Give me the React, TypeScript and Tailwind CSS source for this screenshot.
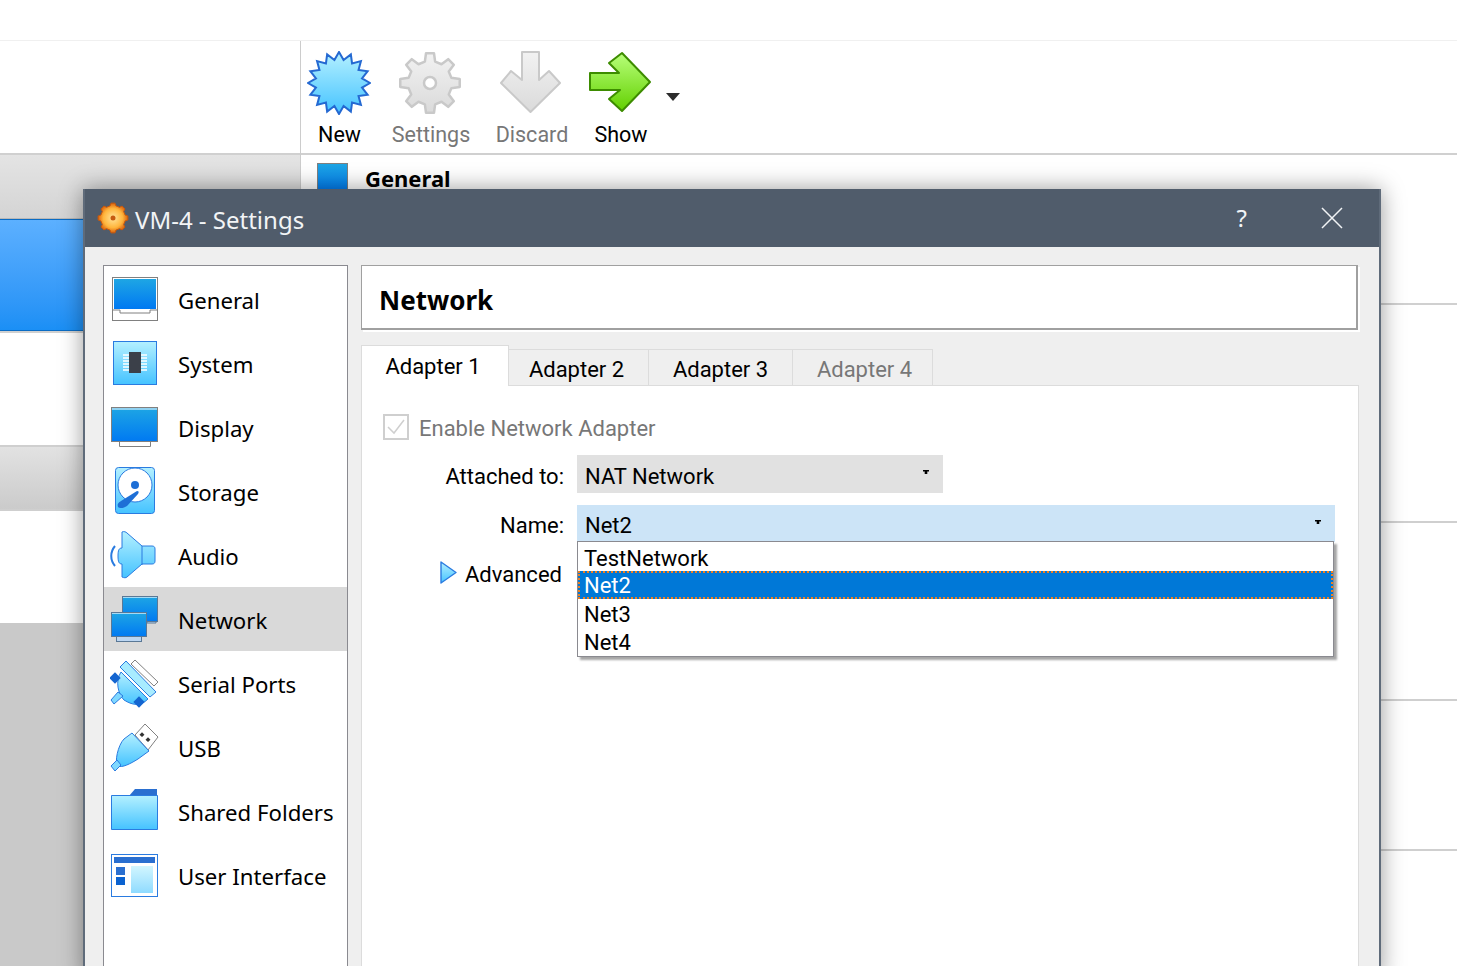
import React from "react";

const starPoints = (cx: number, cy: number, ro: number, ri: number, n: number) =>
  Array.from({ length: n * 2 }, (_, i) => {
    const a = (Math.PI * i) / n - Math.PI / 2;
    const r = i % 2 === 0 ? ro : ri;
    return `${(cx + r * Math.cos(a)).toFixed(2)},${(cy + r * Math.sin(a)).toFixed(2)}`;
  }).join(" ");

const gearPoints = (cx: number, cy: number, ro: number, ri: number, n: number) =>
  Array.from({ length: n }, (_, i) => {
    const s = (2 * Math.PI) / n;
    const a = s * i - Math.PI / 2;
    const pts: [number, number][] = [
      [ri, a - s * 0.3],
      [ro, a - s * 0.17],
      [ro, a + s * 0.17],
      [ri, a + s * 0.3],
    ];
    return pts.map(([r, t]) => `${(cx + r * Math.cos(t)).toFixed(2)},${(cy + r * Math.sin(t)).toFixed(2)}`).join(" ");
  }).join(" ");

const Defs = () => (
  <svg width="0" height="0" className="absolute">
    <defs>
      <linearGradient id="lb" x1="0" y1="0" x2="0" y2="1">
        <stop offset="0" stopColor="#b4f0ff" />
        <stop offset="1" stopColor="#45c3ff" />
      </linearGradient>
      <linearGradient id="scr" x1="0" y1="0" x2="0" y2="1">
        <stop offset="0" stopColor="#1ea6e4" />
        <stop offset="1" stopColor="#0079f2" />
      </linearGradient>
      <linearGradient id="gry" x1="0" y1="0" x2="0" y2="1">
        <stop offset="0" stopColor="#f2f2f2" />
        <stop offset="1" stopColor="#dadada" />
      </linearGradient>
      <linearGradient id="grn" x1="0" y1="0" x2="0" y2="1">
        <stop offset="0" stopColor="#b8ff7a" />
        <stop offset="1" stopColor="#62d000" />
      </linearGradient>
      <radialGradient id="org">
        <stop offset="0" stopColor="#ffe49a" />
        <stop offset="0.65" stopColor="#ffb53c" />
        <stop offset="1" stopColor="#d9600c" />
      </radialGradient>
    </defs>
  </svg>
);

const NewIcon = () => (
  <svg width="64" height="64" viewBox="0 0 64 64">
    <polygon points={starPoints(32, 32, 31, 23.5, 16)} fill="url(#lb)" stroke="#2469d2" strokeWidth="2" />
  </svg>
);
const GearIcon = () => (
  <svg width="64" height="64" viewBox="0 0 64 64">
    <polygon points={gearPoints(32, 32, 30, 22, 8)} fill="url(#gry)" stroke="#c9c9c9" strokeWidth="2.5" strokeLinejoin="round" />
    <circle cx="32" cy="32" r="6" fill="#fff" stroke="#c9c9c9" strokeWidth="2.5" />
  </svg>
);
const DiscardIcon = () => (
  <svg width="64" height="64" viewBox="0 0 64 64">
    <polygon points="23,1 40,1 40,29 50,20 61,32 31.5,61 2,32 12,20 23,29" fill="url(#gry)" stroke="#c9c9c9" strokeWidth="2" strokeLinejoin="round" />
  </svg>
);
const ShowIcon = () => (
  <svg width="64" height="64" viewBox="0 0 64 64">
    <polygon points="2,22 31,22 21,12 34,2 62,31 34,60 21,48 32,39 2,39" fill="url(#grn)" stroke="#3d8c00" strokeWidth="2" strokeLinejoin="round" />
  </svg>
);

const Monitor = ({ x, y, w, h, s = "#808080" }: { x: number; y: number; w: number; h: number; s?: string }) => (
  <g>
    <rect x={x + 0.5} y={y + 0.5} width={w - 1} height={h - 1} fill="url(#scr)" stroke={s} />
    <rect x={x + 1} y={y + 1} width={w - 2} height={1} fill="#fff" opacity="0.6" />
  </g>
);

const icons: Record<string, React.ReactNode> = {
  General: (
    <g>
      <rect x="2.5" y="2.5" width="45" height="43" fill="#fff" stroke="#808080" />
      <rect x="4" y="4" width="42" height="30" fill="url(#scr)" />
      <path d="M3 35h7v3h30v-3h7" fill="none" stroke="#808080" />
    </g>
  ),
  System: (
    <g>
      <rect x="3.5" y="2.5" width="43" height="43" fill="url(#lb)" stroke="#2a7be0" />
      <path d="M13 16h24M13 19h24M13 22h24M13 25h24M13 28h24M13 31h24" stroke="#fff" strokeWidth="1.5" />
      <rect x="19" y="13" width="12" height="21" fill="#3b4049" />
    </g>
  ),
  Display: (
    <g>
      <path d="M9.5 37.5v6h31v-6" fill="#fff" stroke="#808080" />
      <rect x="1.5" y="4.5" width="46" height="34" fill="url(#scr)" stroke="#808080" />
      <rect x="2" y="5" width="45" height="2" fill="#fff" opacity="0.5" />
    </g>
  ),
  Storage: (
    <g>
      <rect x="5.5" y="0.5" width="39" height="46" rx="3" fill="url(#lb)" stroke="#2a7be0" />
      <circle cx="25" cy="18" r="17" fill="#fff" stroke="#2a7be0" />
      <circle cx="25" cy="18" r="4" fill="#1e6fd6" />
      <path d="M8 40c-1-3 0-4 3-6l16-10c2 0 2 1 1 3L17 39c-3 2-7 3-9 1z" fill="#1e6fd6" />
    </g>
  ),
  Audio: (
    <g>
      <path d="M5 15c-5 6-5 14 0 20" fill="none" stroke="#2a7be0" strokeWidth="2" />
      <path d="M12 1c2-1 4 0 5 1l15 13h10c2 0 3 1 3 3v12c0 2-1 3-3 3H32L17 46c-1 1-3 1-5 0V33c-3 0-4-2-4-8s1-8 4-8z" fill="url(#lb)" stroke="#2a7be0" />
      <path d="M32 15v19" stroke="#2a7be0" />
    </g>
  ),
  Network: (
    <g>
      <path d="M37 26v2h9v-2" fill="#bcd6f2" stroke="#5a7896" />
      <Monitor x={12} y={1} w={36} h={26} s="#5a7896" />
      <rect x="6.5" y="40.5" width="25" height="6" fill="#bcd6f2" stroke="#5a7896" />
      <Monitor x={1} y={17} w={36} h={25} s="#5a7896" />
    </g>
  ),
  "Serial Ports": (
    <g>
      <path d="M25 1l23 22-4 4L21 5z" fill="#fff" stroke="#808080" />
      <path d="M16 2l30 31-6 5L10 8z" fill="#a8ecff" stroke="#2a7be0" />
      <path d="M11 13l27 27c-8 8-16 6-24 1C8 35 5 22 11 13z" fill="url(#lb)" stroke="#2a7be0" />
      <rect x="1" y="15" width="8" height="8" transform="rotate(45 5 19)" fill="#1465d0" />
      <rect x="25" y="39" width="8" height="8" transform="rotate(45 29 43)" fill="#1465d0" />
      <path d="M8 33l-7 8 3 4 9-8z" fill="#7fd8ff" stroke="#2a7be0" />
    </g>
  ),
  USB: (
    <g>
      <path d="M25 12L35 1l13 13-10 13z" fill="#fff" stroke="#808080" />
      <rect x="30" y="10" width="3.5" height="3.5" fill="#333" transform="rotate(45 32 12)" />
      <rect x="36" y="15" width="3.5" height="3.5" fill="#333" transform="rotate(45 38 17)" />
      <path d="M22 10l17 18-11 8c-8 5-16 9-20 7-4-3 0-21 6-27z" fill="url(#lb)" stroke="#2a7be0" />
      <path d="M7 37l-6 6 4 5 6-6z" fill="#7fd8ff" stroke="#2a7be0" />
    </g>
  ),
  "Shared Folders": (
    <g>
      <path d="M19 9l6-7h22v8H19z" fill="#2a6fd0" />
      <path d="M1.5 8.5h46v34h-46z" fill="url(#lb)" stroke="#2a7be0" />
    </g>
  ),
  "User Interface": (
    <g>
      <rect x="1.5" y="3.5" width="46" height="42" fill="#fff" stroke="#2a7be0" />
      <rect x="4" y="6" width="41" height="6" fill="#2a6fd0" />
      <rect x="6" y="16" width="9" height="8" fill="#2a6fd0" />
      <rect x="6" y="26" width="9" height="8" fill="#0a62d0" />
      <rect x="21" y="15" width="22" height="27" fill="url(#lb)" opacity="0.6" />
    </g>
  ),
};

const items = ["General", "System", "Display", "Storage", "Audio", "Network", "Serial Ports", "USB", "Shared Folders", "User Interface"];

const Caret = ({ className = "" }: { className?: string }) => (
  <svg width="8" height="5" viewBox="0 0 8 5" className={className}>
    <path d="M1 0h6v1.5H5.3V4H2.7V1.5H1z" fill="#000" />
  </svg>
);

const options = ["TestNetwork", "Net2", "Net3", "Net4"];

export default function App() {
  return (
    <div className="relative h-[966px] w-full overflow-hidden bg-white font-['Roboto',sans-serif] text-[22px] text-black">
      <Defs />
      <div className="h-[41px] border-b border-[#f0f0f0]" />
      <div className="flex">
        <div className="w-[300px] shrink-0">
          <div className="box-content h-[112px] border-b-2 border-[#d0d0d0]" />
          <div className="h-[64px] border-b border-[#b8b8b8] bg-gradient-to-b from-[#e4e4e4] to-[#d4d4d4]" />
          <div className="h-[112px] border-y border-[#0a6cc4] bg-gradient-to-b from-[#5cb0ff] to-[#1a8ff5]" />
          <div className="h-[2px] bg-[#d0d0d0]" />
          <div className="h-[112px] bg-white" />
          <div className="h-[66px] border-y-2 border-[#cfcfcf] bg-gradient-to-b from-[#e2e2e2] to-[#cbcbcb]" />
          <div className="h-[112px] bg-white" />
          <div className="h-[343px] bg-[#c9c9c9]" />
        </div>
        <div className="min-w-0 flex-1 border-l border-[#cccccc]">
          <div className="flex h-[112px] pt-[10px]">
            {[
              { l: "New", w: "w-[77px]", i: <NewIcon />, c: "text-black" },
              { l: "Settings", w: "w-[106px]", i: <GearIcon />, c: "text-[#777]" },
              { l: "Discard", w: "w-[96px]", i: <DiscardIcon />, c: "text-[#777]" },
              { l: "Show", w: "w-[82px]", i: <ShowIcon />, c: "text-black" },
            ].map((b) => (
              <div key={b.l} className={`flex flex-col items-center ${b.w}`}>
                <div className="h-[64px] -translate-x-px">{b.i}</div>
                <span className={`mt-[5px] text-[21.5px] leading-[30px] ${b.c}`}>{b.l}</span>
              </div>
            ))}
            <svg width="14" height="8" viewBox="0 0 14 8" className="ml-[4px] mt-[42px]">
              <path d="M0 0h14L7 8z" fill="#2c2c2c" />
            </svg>
          </div>
          <div className="h-[152px] border-y-2 border-[#d0d0d0]">
            <div className="flex items-start gap-[17px] pl-[16px] pt-[8px]">
              <svg width="31" height="36" viewBox="0 0 31 36" className="shrink-0">
                <rect x="0.5" y="0.5" width="30" height="29" fill="url(#scr)" stroke="#808080" />
                <path d="M0.5 29v6h30v-6" fill="#fff" stroke="#808080" />
              </svg>
              <span className="font-['Noto_Sans',sans-serif] text-[22px] font-bold leading-[30px]">General</span>
            </div>
          </div>
          <div className="h-[218px] border-b-2 border-[#cfcfcf]" />
          <div className="h-[178px] border-b-2 border-[#cfcfcf]" />
          <div className="h-[150px] border-b-2 border-[#cfcfcf]" />
        </div>
      </div>

      <div className="absolute left-[83px] top-[189px] flex h-[790px] w-[1298px] flex-col border-x-2 border-[#5f6b7a] bg-[#efefef] shadow-[0_0_22px_rgba(0,0,0,0.4)]">
        <div className="flex h-[58px] shrink-0 items-center bg-[#505c6b] pl-[12px] text-[#f2f4f6]">
          <svg width="32" height="32" viewBox="0 0 32 32" className="shrink-0">
            <polygon points={gearPoints(16, 16, 15, 12.5, 8)} fill="url(#org)" stroke="#c9590b" strokeWidth="1" strokeLinejoin="round" />
            <circle cx="16" cy="16" r="2.5" fill="#c65a10" />
          </svg>
          <span className="ml-[6px] mt-[3px] font-['Noto_Sans',sans-serif] text-[24px] leading-[30px]">VM-4 - Settings</span>
          <span className="ml-auto mr-[74px] font-['Noto_Sans',sans-serif] text-[24px] leading-[30px]">?</span>
          <svg width="22" height="22" viewBox="0 0 22 22" className="mr-[36px] shrink-0">
            <path d="M1 1l20 20M21 1L1 21" stroke="#f2f4f6" strokeWidth="1.5" />
          </svg>
        </div>

        <div className="flex min-h-0 flex-1 gap-[13px] pl-[18px] pt-[18px]">
          <div className="w-[245px] shrink-0 border-x border-t border-[#8a8a90] bg-white pt-px">
            {items.map((n) => (
              <div key={n} className={`flex h-[64px] items-center pl-[6px] ${n === "Network" ? "bg-[#d9d9d9]" : ""}`}>
                <svg width="50" height="50" viewBox="0 0 50 50" className="mt-[2px] shrink-0">{icons[n]}</svg>
                <span className="ml-[18px] mt-[4px] whitespace-nowrap font-['Noto_Sans',sans-serif] text-[22.2px] leading-[30px]">{n}</span>
              </div>
            ))}
          </div>

          <div className="w-[998px] shrink-0">
            <div className="mr-px flex h-[65px] items-center border-b-2 border-l border-r-2 border-t border-[#a0a0a0] bg-white pl-[17px] pt-[5px] shadow-[2px_2px_0_#fff]">
              <span className="font-['Noto_Sans',sans-serif] text-[26px] font-bold leading-[34px]">Network</span>
            </div>
            <div className="mt-[15px] flex h-[40px] items-end">
              <div className="relative z-10 -mb-px flex h-[41px] w-[148px] items-center justify-center border-x border-t border-[#dcdcdc] bg-white pr-[4px] pt-[1px]">Adapter 1</div>
              {["Adapter 2", "Adapter 3", "Adapter 4"].map((t, i) => (
                <div key={t} className={`flex h-[36px] items-center justify-center border-r border-t border-[#dcdcdc] bg-[#efefef] pt-[3px] ${i === 0 ? "w-[140px] pr-[4px]" : i === 1 ? "w-[144px]" : "w-[140px] pl-[4px] text-[#777]"}`}>
                  {t}
                </div>
              ))}
            </div>
            <div className="h-[600px] border border-[#dcdcdc] bg-white pt-[25px]">
              <div className="flex items-center pl-[21px]">
                <svg width="26" height="26" viewBox="0 0 26 26" className="shrink-0">
                  <rect x="1" y="1" width="24" height="24" fill="#fff" stroke="#cfcfcf" strokeWidth="2" />
                  <path d="M5 13l6 6L21 6" fill="none" stroke="#cfcfcf" strokeWidth="1.5" />
                </svg>
                <span className="ml-[10px] pt-[5px] leading-[26px] text-[#777]">Enable Network Adapter</span>
              </div>
              <div className="mt-[13px] flex h-[38px] items-center">
                <span className="w-[202px] pt-[4px] text-right">Attached to:</span>
                <div className="ml-[13px] flex h-[38px] w-[366px] items-center justify-between bg-[#e1e1e1] pl-[8px] pr-[13px]">
                  <span className="pt-[4px]">NAT Network</span>
                  <Caret className="mb-[3px]" />
                </div>
              </div>
              <div className="relative mt-[12px] flex h-[37px] items-center">
                <span className="w-[202px] pt-[4px] text-right">Name:</span>
                <div className="ml-[13px] flex h-[37px] w-[758px] items-center justify-between bg-[#cce4f7] pl-[8px] pr-[13px]">
                  <span className="pt-[4px]">Net2</span>
                  <Caret className="mb-[3px]" />
                </div>
                <div className="absolute left-[215px] top-[36px] z-20 w-[757px] border border-[#8a8a90] bg-white py-px shadow-[3px_3px_2px_rgba(0,0,0,0.35)]">
                  {options.map((o) => (
                    <div key={o} className={`flex h-[28px] items-center leading-[26px] ${o === "Net2" ? "border-2 border-dotted border-[#f08020] bg-[#0078d7] pl-[4px] pt-[2px] text-white" : "pl-[6px] pt-[3px]"}`}>
                      {o}
                    </div>
                  ))}
                </div>
              </div>
              <div className="mt-[18px] flex h-[24px] items-center pl-[78px]">
                <svg width="17" height="23" viewBox="0 0 17 23" className="shrink-0">
                  <path d="M1 1l15 10.5L1 22z" fill="url(#lb)" stroke="#2a7be0" strokeWidth="1.4" strokeLinejoin="round" />
                </svg>
                <span className="ml-[8px] pt-[5px]">Advanced</span>
              </div>
            </div>
          </div>
        </div>
      </div>
    </div>
  );
}
